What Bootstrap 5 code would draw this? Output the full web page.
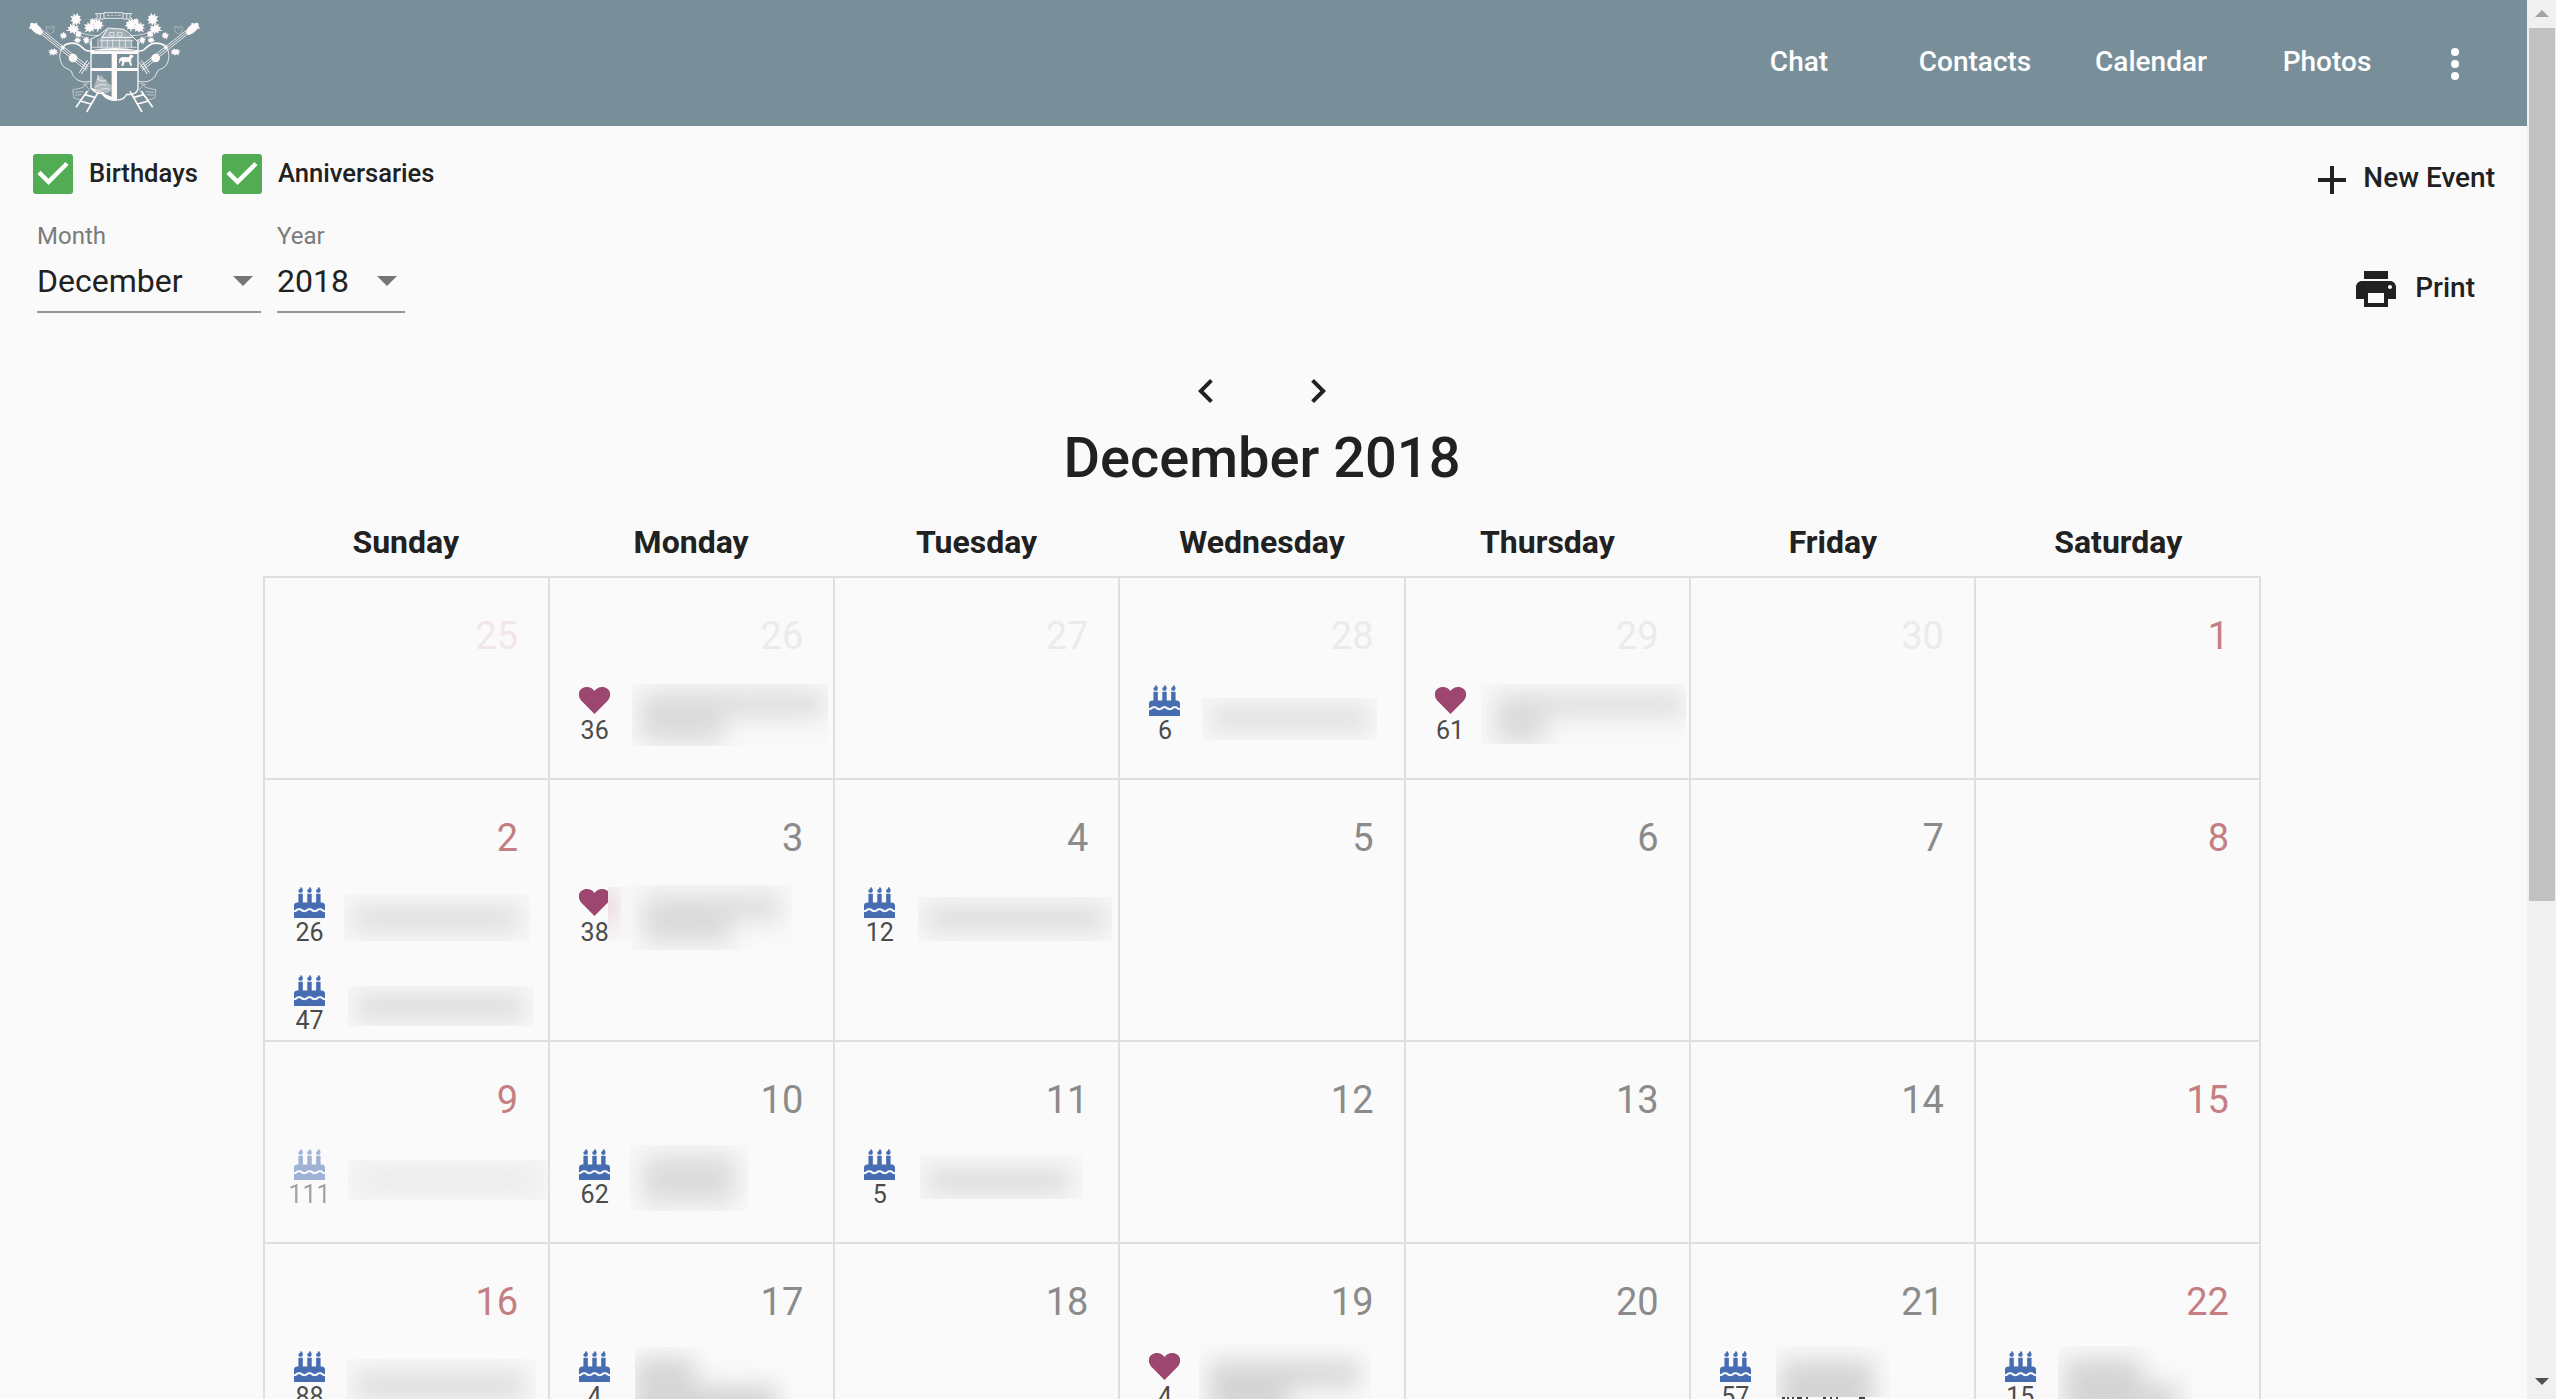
<!DOCTYPE html>
<html lang="en">
<head>
<meta charset="utf-8">
<meta name="viewport" content="width=device-width, initial-scale=1">
<title>Family Calendar</title>
<link href="https://cdn.jsdelivr.net/npm/bootstrap@5.3.0/dist/css/bootstrap.min.css" rel="stylesheet">
<style>
  html, body { height: 100%; overflow: hidden; }
  body { font-family: Roboto, "Liberation Sans", sans-serif; background: #fafafa; color: #212121; }
  svg { display: block; flex: none; }
  .page-main { min-width: 0; }
  .topbar { height: 126px; background: #788f99; padding: 0 32px 0 20px; }
  .topbar .nav-link { width: 176px; padding: 0 0 3px; text-align: center; color: #fff; font-size: 28px; font-weight: 500; line-height: 40px; }
  .dots-btn { width: 80px; padding: 2px 0 0; border: 0; background: none; }
  .filters { padding: 28px 0 0 33px; }
  .filter-item { gap: 16px; width: 189px; font-size: 25.600px; font-weight: 500; line-height: 38px; white-space: nowrap; }
  .filter-item span { margin-top: -2px; }
  .tick { width: 40px; height: 40px; border-radius: 3px; background: #51ac53; }
  .selects { margin: 27px 0 0 4px; gap: 16px; }
  .field-name { font-size: 24px; line-height: 30px; color: #7b7b7b; }
  .field-value { margin-top: 10px; padding: 0 8px 10px 0; font-size: 32px; line-height: 40px; border-bottom: 2px solid #949494; }
  .month-field { width: 224px; }
  .year-field { width: 128px; }
  .tools { padding: 30px 32px 0 0; gap: 61px; }
  .tool { font-size: 28px; font-weight: 500; line-height: 40px; height: 48px; }
  .tool span { margin-top: -5px; }
  .tool-add { gap: 7px; }
  .tool-print { gap: 15px; margin-right: 20px; }
  .tool-print span { margin-top: -3px; }
  .cal { width: 1998px; margin: 54px 0 0 263px; }
  .pager { gap: 64px; }
  .cal-title { margin: 11px 0 32px; font-size: 56px; line-height: 64px; font-weight: 500; }
  .weekdays { display: grid; grid-template-columns: repeat(7, 1fr); padding-bottom: 14px; font-size: 32px; line-height: 40px; font-weight: 700; text-align: center; }
  .days { display: grid; grid-template-columns: repeat(7, 1fr); grid-template-rows: 202px 262px 202px 202px; border: solid #dfdfdf; border-width: 2px 0 0 2px; }
  .day { border: solid #dfdfdf; border-width: 0 2px 2px 0; overflow: hidden; min-width: 0; }
  .num { height: 100px; padding: 36px 30px 0 0; text-align: right; font-size: 38px; line-height: 44px; color: #8b8b8b; }
  .rest .num { color: #c47f82; }
  .out .num { color: #ebebeb; }
  .out.rest .num { color: #f2e7e7; }
  .event { height: 88px; }
  .faded { opacity: .5; }
  .kind { width: 59px; margin-left: 15px; padding-top: 7px; text-align: center; font-size: 25px; line-height: 30px; color: #4b4b4b; flex: none; }
  .kind svg { margin: 0 auto; }
  .kind .heart { margin-top: 2px; margin-bottom: 2px; }
  .who { margin-left: -16px; position: relative; }
  .sbar { width: 29px; background: #f0f0f0; padding: 10px 0 14px; flex: none; }
  .thumb { width: 26px; height: 873px; margin-top: 11px; background: #c1c1c1; }
</style>
<script src="https://cdn.jsdelivr.net/npm/bootstrap@5.3.0/dist/js/bootstrap.bundle.min.js" defer></script>
</head>
<body class="d-flex">

<svg width="0" height="0" class="position-absolute">
  <defs>
    <filter id="soft" x="-50%" y="-150%" width="200%" height="400%" color-interpolation-filters="sRGB"><feGaussianBlur stdDeviation="12"/></filter>
    <symbol id="cake" viewBox="0 0 448 512" preserveAspectRatio="none"><path fill="#466db1" d="M448 384c-28.02 0-31.26-32-74.5-32-43.43 0-46.825 32-74.75 32-27.695 0-31.454-32-74.75-32-42.842 0-47.218 32-74.5 32-28.148 0-31.202-32-74.75-32-43.547 0-46.653 32-74.75 32v-80c0-26.5 21.5-48 48-48h16V112h64v144h64V112h64v144h64V112h64v144h16c26.5 0 48 21.5 48 48v80zm0 128H0v-96c43.356 0 46.767-32 74.75-32 27.951 0 31.253 32 74.75 32 42.843 0 47.217-32 74.5-32 28.148 0 31.201 32 74.75 32 43.357 0 46.767-32 74.75-32 27.488 0 31.252 32 74.5 32v96zM96 96c-17.75 0-32-14.25-32-32 0-31 32-23 32-64 12 0 32 29.5 32 56s-14.25 40-32 40zm128 0c-17.75 0-32-14.25-32-32 0-31 32-23 32-64 12 0 32 29.5 32 56s-14.25 40-32 40zm128 0c-17.75 0-32-14.25-32-32 0-31 32-23 32-64 12 0 32 29.5 32 56s-14.25 40-32 40z"/></symbol>
    <symbol id="heart" viewBox="0 0 31 27"><path fill="#9d4670" d="M15.500 27L2.600 14.100C-3 7.500.500 0 8 0C11 0 13.500 1.300 15.500 4C17.500 1.300 20 0 23 0C30.500 0 34 7.500 28.400 14.100Z"/></symbol>
    <symbol id="tickmark" viewBox="3 3 18 18"><path fill="#fff" d="M10 17l-5-5 1.410-1.410L10 14.170l7.590-7.590L19 8z"/></symbol>
    <symbol id="caret" viewBox="0 0 20 10"><path fill="#757575" d="M0 0h20L10 10z"/></symbol>
    <g id="leaf"><path d="M2-20l5 8 7-2-2 8 8 2-6 6 5 7-9-1-2 8-6-5-9 9 2-11-9-1 5-6-9-7 10-1-2-9 8 5z"/></g>
    <g id="crest-side">
      <path d="M58 98L200 212M66 90L206 200M62 94L203 206" fill="none" stroke-width="2.500"/>
      <path d="M30 74l8-5 12 3 13 12 6 14-8 8-14-6-11-10-6-10z"/>
      <circle cx="35" cy="72" r="4"/><circle cx="30" cy="84" r="3"/><circle cx="49" cy="71" r="3"/>
      <path d="M141 133C122 140 115 162 122 184C130 210 148 203 155 216C160 236 180 251 211 244" fill="none" stroke-width="2.500"/>
      <path d="M132 136C168 118 184 140 194 149C201 154 207 153 213 153" fill="none" stroke-width="5"/>
      <circle cx="159" cy="174" r="13"/>
      <path d="M178 218L202 181M184 222L208 187" stroke-width="3"/>
      <path d="M78 82l4 15 9 5 9-6 3-16-8-1-4 7-5-7z" fill="none" stroke-width="2" opacity=".5"/>
      <use href="#leaf" transform="translate(166 58) scale(.95 1.050) rotate(15)"/>
      <use href="#leaf" transform="translate(158 86) scale(1.050 .85) rotate(50)"/>
      <use href="#leaf" transform="translate(207 82) scale(1 .9) rotate(20)"/>
      <use href="#leaf" transform="translate(232 76) scale(.95 1) rotate(-20)"/>
      <use href="#leaf" transform="translate(218 66) scale(.6) rotate(-50)"/>
      <use href="#leaf" transform="translate(129 107) scale(.6)"/>
      <use href="#leaf" transform="translate(174 102) scale(.6) rotate(30)"/>
      <use href="#leaf" transform="translate(98 156) scale(.85 .6) rotate(15)"/>
      <use href="#leaf" transform="translate(128 142) scale(.4)"/>
      <use href="#leaf" transform="translate(172 120) scale(.6 .5) rotate(60)"/>
      <use href="#leaf" transform="translate(198 121) scale(.55 .65)"/>
      <path d="M170 90C188 104 208 106 238 107M178 106C200 114 206 124 212 135" fill="none" stroke-width="2"/>
      <path d="M202 273L168 322M236 274L200 336M195 284L224 292M181 303L213 312" fill="none" stroke-width="5"/>
      <path d="M158 270L190 262L196 254L208 270L182 300L162 294ZM164 277L190 275M165 285L185 284M188 254L206 250" fill="none" stroke-width="2" opacity=".8"/>
    </g>
  </defs>
</svg>

<main class="page-main flex-grow-1">
  <nav class="topbar d-flex align-items-center">
    <a class="me-auto" href="#" aria-label="Home">
      <svg width="190" height="126" viewBox="0 0 570 378" fill="#fffafa" stroke="#fffafa" stroke-width="0">
        <use href="#crest-side"/>
        <use href="#crest-side" transform="translate(566 0) scale(-1 1)"/>
        <path d="M252 38H309V55H252ZM252 41H226L234 48L226 57H252M309 41H336L328 48L336 57H309M241 41V57M320 41V57" fill="none" stroke-width="2.500"/>
        <path d="M260 46h9M273 46h6M283 46h6M293 46h10" stroke-width="4" fill="none" opacity=".5"/>
        <path d="M238 116L262 86L312 88L330 112L338 140L238 142Z" opacity=".3"/>
        <path d="M211 118Q240 108 264 84L312 88L325 98L352 124M262 88L246 112L340 112" fill="none" stroke-width="3"/>
        <path d="M214 122V143M234 116V142M246 112V142M262 118V142M278 118V142M298 118V142M316 118V142M334 118V142M240 122H340M216 142H350M268 98h14v10h-14zM292 98h14v10h-14z" fill="none" stroke-width="2"/>
        <path d="M213 151Q283 137 354 151V162H213Z"/>
        <path d="M222 152H344" fill="none" stroke="#788f99" stroke-width="1.500"/>
        <path d="M213 118V265Q234 287 249 278C259 303 308 310 320 283Q350 286 354 266V118" fill="none" stroke-width="4"/>
        <path d="M275 158H291V302H275Z"/>
        <path d="M212 204H354V213H212Z"/>
        <path d="M212 262Q224 278 236 270Q252 300 278 302V292L250 280Z"/>
        <path d="M298 176l8-5 20 1 6-9 9 5-3 4-4 4-1 9 3 11-5 2-4-12-13 0-4 12-6-1 3-11-4-5-4 9-2-1z"/>
        <path d="M222 262l4-14 4-12 2-14 6 8 7-5 5 10 9 4 5 10 10 6 1 16-12 8-18 2-14-7-8 3z" opacity=".4"/>
        <path d="M226 262q16-14 34-6M232 238q14 8 24 4M238 272q14-10 30-5M235 226v14" fill="none" stroke-width="2"/>
      </svg>
    </a>
    <a class="nav-link" href="#">Chat</a>
    <a class="nav-link" href="#">Contacts</a>
    <a class="nav-link" href="#">Calendar</a>
    <a class="nav-link" href="#">Photos</a>
    <button class="dots-btn d-flex justify-content-center" aria-label="More">
      <svg width="8" height="34" viewBox="0 0 8 34" fill="#fff"><circle cx="4" cy="5" r="4"/><circle cx="4" cy="17" r="4"/><circle cx="4" cy="29" r="4"/></svg>
    </button>
  </nav>

  <section class="d-flex justify-content-between align-items-start">
    <div class="filters">
      <div class="d-flex">
        <label class="filter-item d-flex align-items-center"><svg class="tick"><use href="#tickmark"/></svg><span>Birthdays</span></label>
        <label class="filter-item d-flex align-items-center"><svg class="tick"><use href="#tickmark"/></svg><span>Anniversaries</span></label>
      </div>
      <div class="selects d-flex">
        <div class="month-field">
          <div class="field-name">Month</div>
          <div class="field-value d-flex justify-content-between align-items-center">December<svg width="20" height="10"><use href="#caret"/></svg></div>
        </div>
        <div class="year-field">
          <div class="field-name">Year</div>
          <div class="field-value d-flex justify-content-between align-items-center">2018<svg width="20" height="10"><use href="#caret"/></svg></div>
        </div>
      </div>
    </div>
    <div class="tools d-flex flex-column align-items-end">
      <div class="tool tool-add d-flex align-items-center"><svg width="48" height="48" viewBox="0 0 24 24" fill="#212121"><path d="M19 13h-6v6h-2v-6H5v-2h6V5h2v6h6v2z"/></svg><span>New Event</span></div>
      <div class="tool tool-print d-flex align-items-center"><svg width="48" height="48" viewBox="0 0 24 24" fill="#212121"><path d="M19 8H5c-1.660 0-3 1.340-3 3v6h4v4h12v-4h4v-6c0-1.660-1.340-3-3-3zm-3 11H8v-5h8v5zm3-7c-.55 0-1-.45-1-1s.45-1 1-1 1 .45 1 1-.45 1-1 1zm-1-9H6v4h12V3z"/></svg><span>Print</span></div>
    </div>
  </section>

  <section class="cal">
    <div class="pager d-flex justify-content-center">
      <svg width="48" height="48" viewBox="0 0 24 24" fill="#212121"><path d="M15.410 7.410L14 6l-6 6 6 6 1.410-1.410L10.830 12z"/></svg>
      <svg width="48" height="48" viewBox="0 0 24 24" fill="#212121"><path d="M10 6L8.590 7.410 13.170 12l-4.580 4.590L10 18l6-6z"/></svg>
    </div>
    <h1 class="cal-title text-center">December 2018</h1>
    <div class="weekdays"><div>Sunday</div><div>Monday</div><div>Tuesday</div><div>Wednesday</div><div>Thursday</div><div>Friday</div><div>Saturday</div></div>
    <div class="days">
      <div class="day out rest"><div class="num">25</div></div>
      <div class="day out"><div class="num">26</div>
        <div class="event d-flex"><div class="kind"><svg class="heart" width="31" height="27"><use href="#heart"/></svg>36</div>
          <svg class="who" width="225" height="88"><svg x="24" y="6" width="196" height="62"><rect width="196" height="62" fill="#f9f9f9"/><g filter="url(#soft)" fill="#dadada"><rect x="8" y="8" width="184" height="24"/><rect x="8" y="30" width="84" height="28"/></g></svg></svg></div></div>
      <div class="day out"><div class="num">27</div></div>
      <div class="day out"><div class="num">28</div>
        <div class="event d-flex"><div class="kind"><svg width="31" height="31"><use href="#cake"/></svg>6</div>
          <svg class="who" width="225" height="88"><svg x="24" y="20" width="175" height="42"><rect width="175" height="42" fill="#f8f8f8"/><rect x="8" y="9" width="160" height="24" filter="url(#soft)" fill="#dedede"/></svg></svg></div></div>
      <div class="day out"><div class="num">29</div>
        <div class="event d-flex"><div class="kind"><svg class="heart" width="31" height="27"><use href="#heart"/></svg>61</div>
          <svg class="who" width="225" height="88"><svg x="17" y="6" width="205" height="60"><rect width="205" height="60" fill="#f9f9f9"/><g filter="url(#soft)" fill="#dadada"><rect x="14" y="10" width="190" height="21"/><rect x="14" y="28" width="50" height="32"/></g></svg></svg></div></div>
      <div class="day out"><div class="num">30</div></div>
      <div class="day rest"><div class="num">1</div></div>

      <div class="day rest"><div class="num">2</div>
        <div class="event d-flex"><div class="kind"><svg width="31" height="31"><use href="#cake"/></svg>26</div>
          <svg class="who" width="225" height="88"><svg x="21" y="14" width="186" height="47"><rect width="186" height="47" fill="#f8f8f8"/><rect x="8" y="13" width="168" height="24" filter="url(#soft)" fill="#dcdcdc"/></svg></svg></div>
        <div class="event d-flex"><div class="kind"><svg width="31" height="31"><use href="#cake"/></svg>47</div>
          <svg class="who" width="225" height="88"><svg x="25" y="18" width="185" height="40"><rect width="185" height="40" fill="#f8f8f8"/><rect x="8" y="9" width="168" height="24" filter="url(#soft)" fill="#dadada"/></svg></svg></div></div>
      <div class="day"><div class="num">3</div>
        <div class="event d-flex"><div class="kind"><svg class="heart" width="31" height="27"><use href="#heart"/></svg>38</div>
          <svg class="who" width="225" height="88"><svg y="7" width="23" height="54"><rect width="23" height="54" fill="#f7f6f6"/><rect x="-14" y="8" width="18" height="24" filter="url(#soft)" fill="#dbb9c9"/></svg><svg x="23" y="5" width="161" height="65"><rect width="161" height="65" fill="#f9f9f9"/><g filter="url(#soft)" fill="#dadada"><rect x="12" y="10" width="138" height="24"/><rect x="12" y="32" width="88" height="26"/></g></svg></svg></div></div>
      <div class="day"><div class="num">4</div>
        <div class="event d-flex"><div class="kind"><svg width="31" height="31"><use href="#cake"/></svg>12</div>
          <svg class="who" width="225" height="88"><svg x="25" y="17" width="194" height="44"><rect width="194" height="44" fill="#f8f8f8"/><rect x="8" y="10" width="180" height="24" filter="url(#soft)" fill="#dadada"/></svg></svg></div></div>
      <div class="day"><div class="num">5</div></div>
      <div class="day"><div class="num">6</div></div>
      <div class="day"><div class="num">7</div></div>
      <div class="day rest"><div class="num">8</div></div>

      <div class="day rest"><div class="num">9</div>
        <div class="event faded d-flex"><div class="kind"><svg width="31" height="31"><use href="#cake"/></svg>111</div>
          <svg class="who" width="225" height="88"><svg x="25" y="18" width="200" height="40"><rect width="200" height="40" fill="#f6f6f6"/><rect x="8" y="8" width="184" height="24" filter="url(#soft)" fill="#dadada"/></svg></svg></div></div>
      <div class="day"><div class="num">10</div>
        <div class="event d-flex"><div class="kind"><svg width="31" height="31"><use href="#cake"/></svg>62</div>
          <svg class="who" width="225" height="88"><svg x="22" y="3" width="118" height="66"><rect width="118" height="66" fill="#f9f9f9"/><rect x="12" y="10" width="94" height="48" filter="url(#soft)" fill="#dbdbdb"/></svg></svg></div></div>
      <div class="day"><div class="num">11</div>
        <div class="event d-flex"><div class="kind"><svg width="31" height="31"><use href="#cake"/></svg>5</div>
          <svg class="who" width="225" height="88"><svg x="27" y="13" width="163" height="44"><rect width="163" height="44" fill="#f8f8f8"/><rect x="6" y="14" width="144" height="24" filter="url(#soft)" fill="#dadada"/></svg></svg></div></div>
      <div class="day"><div class="num">12</div></div>
      <div class="day"><div class="num">13</div></div>
      <div class="day"><div class="num">14</div></div>
      <div class="day rest"><div class="num">15</div></div>

      <div class="day rest"><div class="num">16</div>
        <div class="event d-flex"><div class="kind"><svg width="31" height="31"><use href="#cake"/></svg>88</div>
          <svg class="who" width="225" height="88"><svg x="24" y="15" width="189" height="44"><rect width="189" height="44" fill="#f8f8f8"/><rect x="8" y="14" width="170" height="24" filter="url(#soft)" fill="#dadada"/></svg></svg></div></div>
      <div class="day"><div class="num">17</div>
        <div class="event d-flex"><div class="kind"><svg width="31" height="31"><use href="#cake"/></svg>4</div>
          <svg class="who" width="225" height="88"><svg x="27" y="3" width="157" height="60"><rect width="157" height="60" fill="#fafafa"/><g filter="url(#soft)" fill="#d0d0d0"><rect x="0" y="12" width="60" height="24"/><rect x="-2" y="40" width="144" height="30"/></g></svg></svg></div></div>
      <div class="day"><div class="num">18</div></div>
      <div class="day"><div class="num">19</div>
        <div class="event d-flex"><div class="kind"><svg class="heart" width="31" height="27"><use href="#heart"/></svg>4</div>
          <svg class="who" width="225" height="88"><svg x="21" y="0" width="172" height="66"><rect width="172" height="66" fill="#fafafa"/><g filter="url(#soft)" fill="#d4d4d4"><rect x="10" y="17" width="150" height="26"/><rect x="10" y="42" width="80" height="30"/></g></svg></svg></div></div>
      <div class="day"><div class="num">20</div></div>
      <div class="day"><div class="num">21</div>
        <div class="event d-flex"><div class="kind"><svg width="31" height="31"><use href="#cake"/></svg>57</div>
          <svg class="who" width="225" height="88"><path d="M33 54h3M38 54h2M43 54h2M48 54h5M57 54h2M74 54h3M81 54h2M87 54h2M110 54h6" stroke="#444" stroke-width="2"/><svg x="27" y="2" width="114" height="51"><rect width="114" height="51" fill="#fafafa"/><rect x="4" y="14" width="94" height="60" filter="url(#soft)" fill="#d4d4d4"/></svg></svg></div></div>
      <div class="day rest"><div class="num">22</div>
        <div class="event d-flex"><div class="kind"><svg width="31" height="31"><use href="#cake"/></svg>15</div>
          <svg class="who" width="225" height="88"><svg x="24" y="2" width="134" height="64"><rect width="134" height="64" fill="#fafafa"/><g filter="url(#soft)" fill="#d4d4d4"><rect x="6" y="12" width="78" height="26"/><rect x="6" y="38" width="114" height="34"/></g></svg></svg></div></div>
    </div>
  </section>
</main>

<aside class="sbar d-flex flex-column align-items-center">
  <svg width="14" height="7" viewBox="0 0 14 7"><path d="M7 0l7 7H0z" fill="#a3a3a3"/></svg>
  <div class="thumb"></div>
  <svg class="mt-auto" width="14" height="7" viewBox="0 0 14 7"><path d="M0 0h14L7 7z" fill="#505050"/></svg>
</aside>
</body>
</html>
